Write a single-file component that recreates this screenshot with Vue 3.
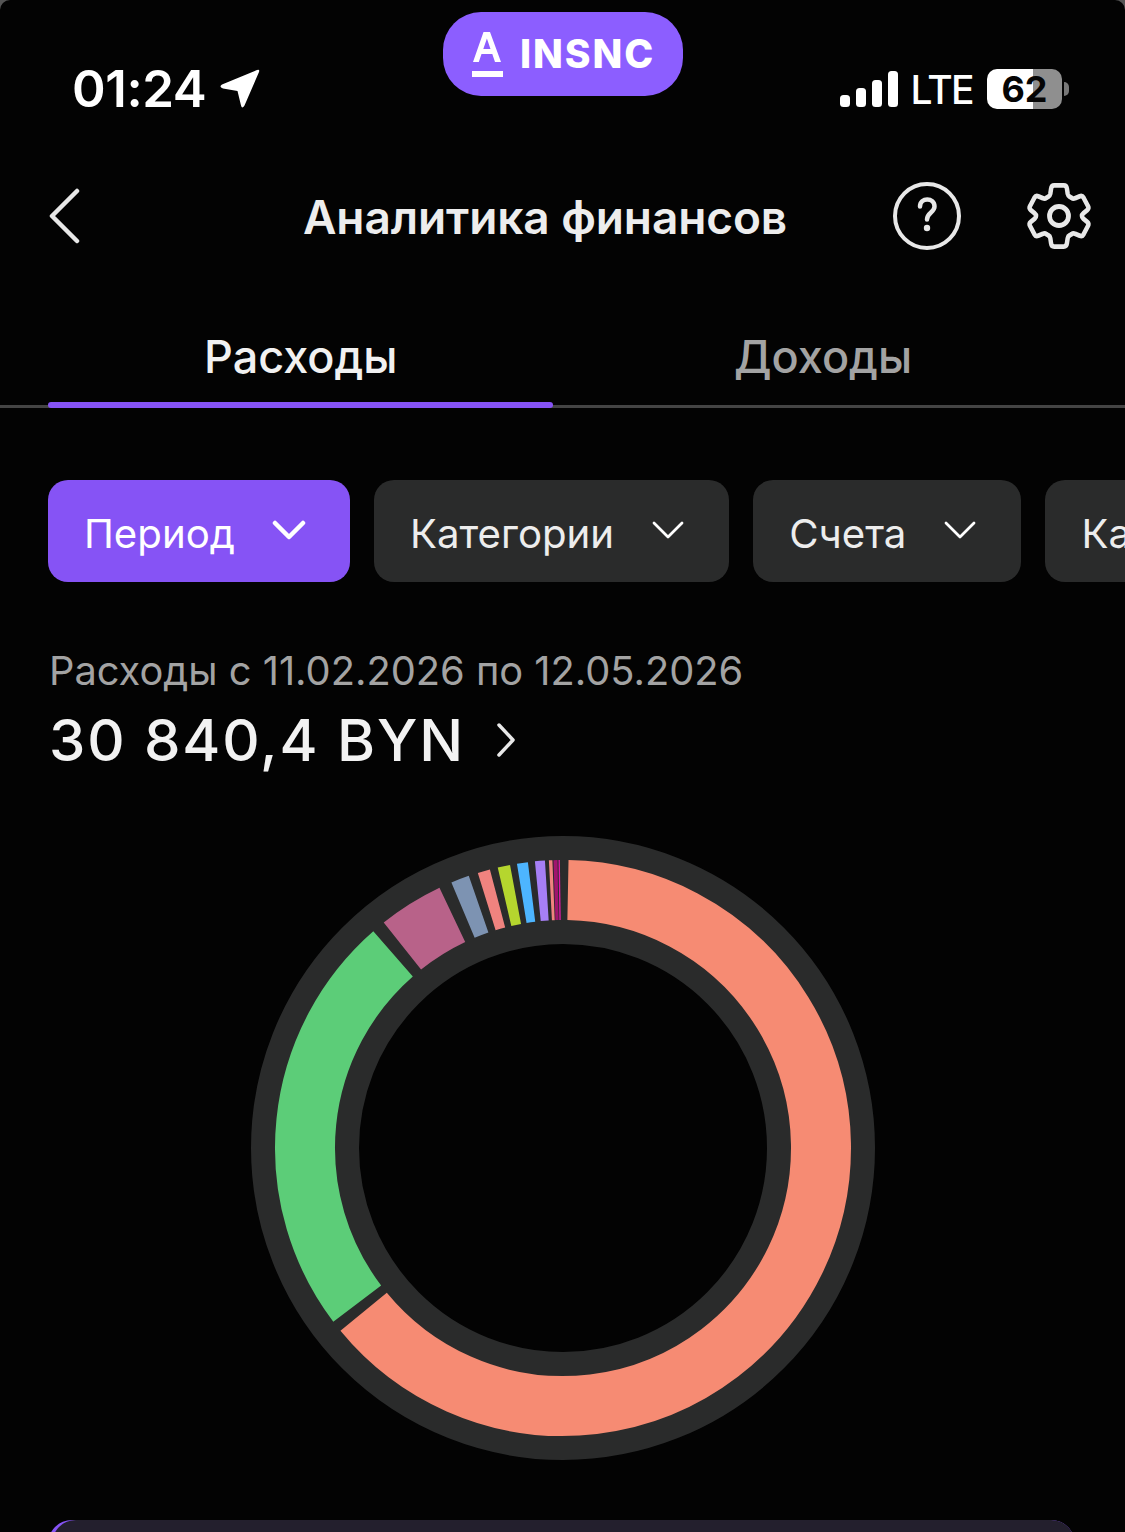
<template>
  <div class="screen">
    <div class="status">
      <div class="status-left">
        <span class="time">01:24</span>
        <svg class="arrow" width="42" height="42" viewBox="0 0 42 42">
          <path d="M38 2 Q41 1 40 4 L25.500 37.500 Q23 41.500 22 37.500 L18.500 23 L4 20.500 Q-0.500 19 3 16.500 Z" fill="#fff" />
        </svg>
      </div>
      <div class="island">
        <svg class="logo" width="32" height="46" viewBox="0 0 32 46">
          <path d="M2 31 L12.500 1 H19 L30 31 H24 L21.300 23 H10.500 L7.800 31 Z M12.300 18 H19.500 L15.900 7.500 Z" fill="#fff" fill-rule="evenodd" />
          <rect x="1" y="40" width="31" height="6" fill="#fff" />
        </svg>
        <span class="island-text">INSNC</span>
      </div>
      <div class="status-right">
        <svg width="58" height="38" viewBox="0 0 58 38">
          <rect x="0" y="25" width="10" height="12" rx="3.500" fill="#fff" />
          <rect x="16" y="18" width="10" height="19" rx="3.500" fill="#fff" />
          <rect x="32" y="10" width="10" height="27" rx="3.500" fill="#fff" />
          <rect x="48" y="1" width="10" height="36" rx="3.500" fill="#fff" />
        </svg>
        <span class="lte">LTE</span>
        <div class="battery">62</div>
        <div class="battery-cap"></div>
      </div>
    </div>

    <header class="topbar">
      <svg class="back" width="32" height="56" viewBox="0 0 32 56">
        <path d="M29 3 L4 28 L29 53" fill="none" stroke="#e8e8e8" stroke-width="4.500" stroke-linecap="round" stroke-linejoin="round" />
      </svg>
      <h1 class="title">Аналитика финансов</h1>
      <div class="top-icons">
        <svg width="68" height="68" viewBox="0 0 68 68">
          <circle cx="34" cy="34" r="32" fill="none" stroke="#e8e8e8" stroke-width="4" />
          <path d="M27 24.500 C27 15 41.500 15 41.500 24.500 C41.500 30.500 34 30.500 34 37.500" fill="none" stroke="#e8e8e8" stroke-width="4.500" stroke-linecap="round" />
          <circle cx="34" cy="46" r="3.200" fill="#e8e8e8" />
        </svg>
        <svg width="68" height="68" viewBox="0 0 24 24">
          <path transform="translate(12 12) scale(.93 1) translate(-12 -12)" d="M10.200 1.200 H13.800 C14.500 1.200 14.900 1.600 15 2.300 L15.300 4.200 C15.400 4.700 15.700 5 16.100 5.200 L16.800 5.600 C17.200 5.900 17.700 5.900 18.100 5.700 L19.900 5 C20.500 4.800 21 5 21.300 5.500 L23 8.500 C23.300 9 23.200 9.500 22.700 9.900 L21.200 11.100 C20.800 11.400 20.700 11.700 20.700 12 C20.700 12.300 20.800 12.600 21.200 12.900 L22.700 14.100 C23.200 14.500 23.300 15 23 15.500 L21.300 18.500 C21 19 20.500 19.200 19.900 19 L18.100 18.300 C17.700 18.100 17.200 18.100 16.800 18.400 L16.100 18.800 C15.700 19 15.400 19.300 15.300 19.800 L15 21.700 C14.900 22.400 14.500 22.800 13.800 22.800 H10.200 C9.500 22.800 9.100 22.400 9 21.700 L8.700 19.800 C8.600 19.300 8.300 19 7.900 18.800 L7.200 18.400 C6.800 18.100 6.300 18.100 5.900 18.300 L4.100 19 C3.500 19.200 3 19 2.700 18.500 L1 15.500 C0.700 15 0.800 14.500 1.300 14.100 L2.800 12.900 C3.200 12.600 3.300 12.300 3.300 12 C3.300 11.700 3.200 11.400 2.800 11.100 L1.300 9.900 C0.800 9.500 0.700 9 1 8.500 L2.700 5.500 C3 5 3.500 4.800 4.100 5 L5.900 5.700 C6.300 5.900 6.800 5.900 7.200 5.600 L7.900 5.200 C8.300 5 8.600 4.700 8.700 4.200 L9 2.300 C9.100 1.600 9.500 1.200 10.200 1.200 Z" fill="none" stroke="#e8e8e8" stroke-width="1.700" stroke-linejoin="round" />
          <circle cx="12" cy="12" r="3.350" fill="none" stroke="#e8e8e8" stroke-width="1.700" />
        </svg>
      </div>
    </header>

    <nav class="tabs">
      <div class="tab active">Расходы</div>
      <div class="tab">Доходы</div>
    </nav>

    <div class="chips">
      <div v-for="chip in chips" :key="chip.label" class="chip" :class="{ selected: chip.selected }">
        <span>{{ chip.label }}</span>
        <svg v-if="chip.arrow" width="34" height="22" viewBox="0 0 34 22">
          <path d="M3 4 L17 18 L31 4" fill="none" stroke="#fff" :stroke-width="chip.selected ? 4.500 : 2.800" stroke-linecap="round" stroke-linejoin="round" />
        </svg>
      </div>
    </div>

    <section class="summary">
      <p class="range">Расходы с 11.02.2026 по 12.05.2026</p>
      <div class="total">
        <span>30 840,4 BYN</span>
        <svg width="20" height="36" viewBox="0 0 20 36">
          <path d="M3 3 L17 18 L3 33" fill="none" stroke="#e8e8e8" stroke-width="3.500" stroke-linecap="round" stroke-linejoin="round" />
        </svg>
      </div>
    </section>

    <div class="chart">
      <svg width="624" height="624" viewBox="0 0 624 624">
        <circle cx="312" cy="312" r="258" fill="none" stroke="#2a2b2b" stroke-width="108" />
        <path v-for="s in segments" :key="s.from" :d="arc(s.from, s.to)" fill="none" :stroke="s.color" stroke-width="60" />
      </svg>
    </div>

    <div class="card-wrap">
      <div class="card"></div>
    </div>
  </div>
</template>

<script setup>
const chips = [
  { label: 'Период', selected: true, arrow: true },
  { label: 'Категории', arrow: true },
  { label: 'Счета', arrow: true },
  { label: 'Карты' },
];

// angles clockwise from the top of the ring
const segments = [
  { from: 1.1, to: 230.6, color: '#f68b73' },
  { from: 232.9, to: 318.8, color: '#5ccd78' },
  { from: 321.5, to: 334.6, color: '#b86289' },
  { from: 337.2, to: 340.9, color: '#7d93b2' },
  { from: 342.8, to: 345.3, color: '#f0837f' },
  { from: 346.9, to: 349.4, color: '#b5d62e' },
  { from: 350.8, to: 353, color: '#4db5ff' },
  { from: 354.4, to: 356.4, color: '#a67ff5' },
  { from: 357.2, to: 357.9, color: '#f0837f' },
  { from: 358.1, to: 358.9, color: '#a0146e' },
  { from: 359.1, to: 359.4, color: '#e01aa8' },
];

const point = (deg) => {
  const rad = (deg * Math.PI) / 180;
  return `${(312 + 258 * Math.sin(rad)).toFixed(2)} ${(312 - 258 * Math.cos(rad)).toFixed(2)}`;
};

const arc = (from, to) => {
  const large = to - from > 180 ? 1 : 0;
  return `M${point(from)} A258 258 0 ${large} 1 ${point(to)}`;
};
</script>

<style scoped>
.screen {
  width: 1125px;
  height: 1532px;
  overflow: hidden;
  background: #030303;
  border-radius: 10px 10px 0 0;
  color: #fff;
  font-family: Inter, "Noto Sans", sans-serif;
  position: relative;
}

.status {
  height: 136px;
  padding: 0 56px 0 72px;
  box-sizing: border-box;
  display: flex;
  justify-content: space-between;
  align-items: flex-start;
}

.status-left {
  display: flex;
  align-items: center;
  gap: 13px;
  margin-top: 61px;
}

.time {
  font-size: 51px;
  font-weight: 600;
  line-height: 56px;
  letter-spacing: -0.4px;
}

.island {
  position: absolute;
  left: 443px;
  top: 12px;
  width: 240px;
  height: 84px;
  background: #8c5eff;
  border-radius: 38px;
  display: flex;
  align-items: center;
  justify-content: center;
  gap: 17px;
}

.island-text {
  font-size: 39px;
  font-weight: 800;
  letter-spacing: 1.900px;
  line-height: 46px;
}

.status-right {
  display: flex;
  align-items: center;
  margin-top: 69px;
}

.lte {
  font-size: 39px;
  font-weight: 500;
  line-height: 38px;
  letter-spacing: -1.600px;
  margin: 2px 14px 0 12px;
}

.battery {
  width: 75px;
  height: 40px;
  border-radius: 10px;
  background: linear-gradient(to right, #fff 62%, #8f8f8f 62%);
  text-align: center;
  color: #050505;
  font-size: 36px;
  font-weight: 700;
  line-height: 40px;
}

.battery-cap {
  width: 5px;
  height: 14px;
  margin-left: 2px;
  background: #777;
  border-radius: 0 5px 5px 0;
}

.topbar {
  height: 160px;
  padding: 0 32px 0 48px;
  display: flex;
  align-items: flex-start;
}

.back {
  margin-top: 52px;
}

.title {
  margin: 54px 0 0 223px;
  font-size: 46px;
  font-weight: 600;
  line-height: 54px;
  letter-spacing: -0.100px;
  color: #ededed;
  white-space: nowrap;
}

.top-icons {
  display: flex;
  gap: 64px;
  margin: 46px 0 0 auto;
}

.tabs {
  display: flex;
  height: 112px;
  border-bottom: 3px solid #444;
  box-sizing: border-box;
}

.tab {
  width: 553px;
  padding-left: 204px;
  box-sizing: border-box;
  font-size: 45px;
  font-weight: 500;
  line-height: 122px;
  color: #a3a3a3;
  position: relative;
}

.tab + .tab {
  padding-left: 181px;
  width: 572px;
}

.tab.active {
  color: #f1f1f1;
}

.tab.active::after {
  content: "";
  position: absolute;
  left: 48px;
  right: 0;
  bottom: -3px;
  height: 6px;
  background: #8653f5;
  border-radius: 3px;
}

.chips {
  display: flex;
  gap: 24px;
  padding-left: 48px;
  margin-top: 72px;
  white-space: nowrap;
}

.chip {
  flex: none;
  height: 102px;
  padding: 0 44px 0 36px;
  display: flex;
  align-items: center;
  gap: 37px;
  border-radius: 20px;
  background: #2a2b2b;
  font-size: 40.200px;
  line-height: 50px;
  color: #ededed;
}

.chip span {
  margin-top: 5px;
}

.chip svg {
  margin-top: -3px;
}

.chip.selected {
  background: #8653f5;
  color: #fff;
}

.summary {
  padding-left: 49px;
  margin-top: 63px;
}

.range {
  margin: 0;
  font-size: 39.800px;
  line-height: 52px;
  color: #a3a3a3;
}

.total {
  display: flex;
  align-items: center;
  gap: 31px;
  margin-top: 9px;
  font-size: 58px;
  font-weight: 500;
  line-height: 68px;
  letter-spacing: 1.900px;
  color: #f2f2f2;
}

.chart {
  display: flex;
  justify-content: center;
  margin: 62px 0 0 1px;
}

.chart svg {
  display: block;
}

.card-wrap {
  margin: 60px 50px 0 48px;
  height: 80px;
  background: #8653f5;
  border-radius: 24px 24px 0 0;
}

.card {
  height: 100%;
  margin-left: 4px;
  background: #231f2d;
  border-radius: 24px 24px 0 0;
}
</style>

<style>
body {
  background: #555;
}
</style>
